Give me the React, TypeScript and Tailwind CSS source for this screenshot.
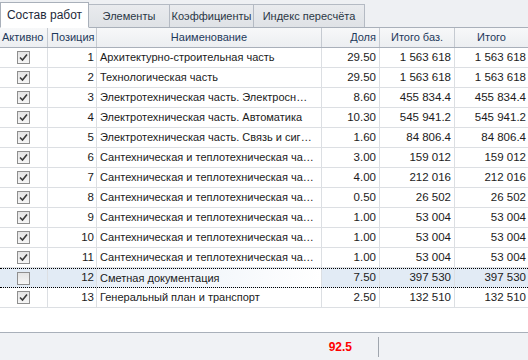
import React from "react";

interface Row {
  active: boolean;
  pos: number;
  name: string;
  share: string;
  base: string;
  total: string;
}

const rows: Row[] = [
  { active: true, pos: 1, name: "Архитектурно-строительная часть", share: "29.50", base: "1 563 618", total: "1 563 618" },
  { active: true, pos: 2, name: "Технологическая часть", share: "29.50", base: "1 563 618", total: "1 563 618" },
  { active: true, pos: 3, name: "Электротехническая часть. Электросн…", share: "8.60", base: "455 834.4", total: "455 834.4" },
  { active: true, pos: 4, name: "Электротехническая часть. Автоматика", share: "10.30", base: "545 941.2", total: "545 941.2" },
  { active: true, pos: 5, name: "Электротехническая часть. Связь и сиг…", share: "1.60", base: "84 806.4", total: "84 806.4" },
  { active: true, pos: 6, name: "Сантехническая и теплотехническая ча…", share: "3.00", base: "159 012", total: "159 012" },
  { active: true, pos: 7, name: "Сантехническая и теплотехническая ча…", share: "4.00", base: "212 016", total: "212 016" },
  { active: true, pos: 8, name: "Сантехническая и теплотехническая ча…", share: "0.50", base: "26 502", total: "26 502" },
  { active: true, pos: 9, name: "Сантехническая и теплотехническая ча…", share: "1.00", base: "53 004", total: "53 004" },
  { active: true, pos: 10, name: "Сантехническая и теплотехническая ча…", share: "1.00", base: "53 004", total: "53 004" },
  { active: true, pos: 11, name: "Сантехническая и теплотехническая ча…", share: "1.00", base: "53 004", total: "53 004" },
  { active: false, pos: 12, name: "Сметная документация", share: "7.50", base: "397 530", total: "397 530" },
  { active: true, pos: 13, name: "Генеральный план и транспорт", share: "2.50", base: "132 510", total: "132 510" },
];

const cols = "grid grid-cols-[48px_49px_225px_58px_75px_73px]";

function Check({ on }: { on: boolean }) {
  return (
    <div className="w-[13px] h-[13px] border border-[#8f8f8f] bg-gradient-to-b from-[#e4e4e4] to-[#f6f6f6] flex items-center justify-center">
      {on && (
        <svg width="9" height="9" viewBox="0 0 9 9">
          <path d="M1 4.5 L3.5 7 L8 1.5" fill="none" stroke="#3a3a3a" strokeWidth="1.6" />
        </svg>
      )}
    </div>
  );
}

const tabs = ["Состав работ", "Элементы", "Коэффициенты", "Индекс пересчёта"];

export default function App() {
  return (
    <div
      className="w-[528px] h-[360px] bg-white flex flex-col overflow-hidden text-[11px] text-[#1b1b1b]"
      style={{ fontFamily: '"Liberation Sans", Arial, sans-serif' }}
    >
      {/* вкладки */}
      <div className="h-[28px] bg-[#eef0f3] flex items-end shrink-0 border-b border-[#a9b0ba]">
        {tabs.map((t, i) =>
          i === 0 ? (
            <div
              key={t}
              className="w-[89px] h-[26px] -mb-px flex items-center justify-center bg-white border border-[#a9b0ba] border-b-white text-[12px] text-[#1e2a3a]"
            >
              {t}
            </div>
          ) : (
            <div
              key={t}
              className={`${i === 1 ? "w-[81px]" : i === 2 ? "w-[84px]" : "w-[111px]"} h-[23px] flex items-center justify-center bg-gradient-to-b from-[#e9ebee] to-[#dfe2e6] border border-[#b4bac3] border-l-0 border-b-0 text-[11px] text-[#2b3746]`}
            >
              {t}
            </div>
          )
        )}
      </div>

      {/* заголовок таблицы */}
      <div className={`${cols} h-[20px] shrink-0 bg-gradient-to-b from-[#f7f8f9] to-[#eceef1] border-b border-[#a9b0ba] text-[#1e395b]`}>
        <div className="border-r border-[#c5cad1] flex items-center pl-[2px] overflow-hidden whitespace-nowrap">Активно</div>
        <div className="border-r border-[#c5cad1] flex items-center pl-[3px]">Позиция</div>
        <div className="border-r border-[#c5cad1] flex items-center justify-center">Наименование</div>
        <div className="border-r border-[#c5cad1] flex items-center justify-end pr-[3px]">Доля</div>
        <div className="border-r border-[#c5cad1] flex items-center justify-center">Итого баз.</div>
        <div className="flex items-center justify-center">Итого</div>
      </div>

      {/* строки */}
      <div className="flex-1 text-[11.5px]">
        {rows.map((r) => {
          const sel = r.pos === 12;
          return (
            <div
              key={r.pos}
              className={`${cols} h-[20px] ${
                sel ? "bg-[#e2ebf5] border-y border-dotted border-black" : "border-b border-[#dcdfe3]"
              }`}
            >
              <div className="border-r border-[#dcdfe3] flex items-center justify-center">
                <Check on={r.active} />
              </div>
              <div className="border-r border-[#dcdfe3] flex items-center justify-end pr-[2px]">{r.pos}</div>
              <div
                className={`border-r border-[#dcdfe3] flex items-center pl-[3px] pr-[2px] overflow-hidden whitespace-nowrap text-[11px] ${
                  sel ? "bg-gradient-to-r from-[#e8eff7] to-white" : ""
                }`}
              >
                {r.name}
              </div>
              <div className="border-r border-[#dcdfe3] flex items-center justify-end pr-[3px]">{r.share}</div>
              <div className="border-r border-[#dcdfe3] flex items-center justify-end pr-[3px]">{r.base}</div>
              <div className="flex items-center justify-end pr-[2px] whitespace-nowrap">{r.total}</div>
            </div>
          );
        })}
      </div>

      {/* итог */}
      <div className="h-[28px] shrink-0 bg-[#f0f2f5] border-t border-[#a9b0ba] flex items-center">
        <div className="w-[352px] text-right font-bold text-[#ff0000] text-[12px]">92.5</div>
        <div className="ml-[26px] w-px h-[20px] bg-[#a0a6ae]" />
      </div>
    </div>
  );
}
